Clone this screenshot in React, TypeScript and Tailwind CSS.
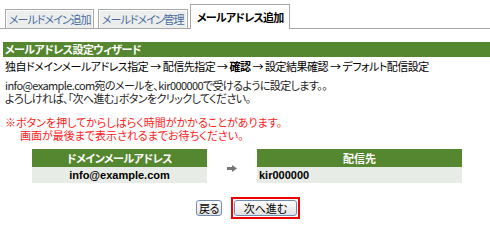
import React from 'react';

const font = "font-['MS_UI_Gothic','Noto_Sans_CJK_JP',sans-serif] [font-feature-settings:'palt']";

function Tab({ label, active, w }: { label: string; active?: boolean; w: string }) {
  if (active) {
    return (
      <div className={`-mb-px h-[25px] border border-b-0 border-[#a8a8a8] bg-white pl-[6px] pt-[5px] text-[11px] font-bold leading-[14px] tracking-[-0.8px] text-black ${w}`}>
        {label}
      </div>
    );
  }
  return (
    <div className={`h-[19px] border border-b-0 border-[#a8a8a8] bg-[#eceeee] text-[11px] leading-[16px] tracking-[-1px] text-[#4a6c9c] ${w}`}>
      <div className="h-full border border-b-0 border-white pl-[2px]">{label}</div>
    </div>
  );
}

function Arrow() {
  return (
    <svg width="10" height="7" viewBox="0 0 10 7" className="mx-auto">
      <rect x="0" y="2" width="6" height="3" fill="#777" />
      <path d="M5 0 L10 3.5 L5 7 Z" fill="#777" />
    </svg>
  );
}

export default function App() {
  return (
    <div className={`w-[490px] h-[244px] overflow-hidden bg-white text-black ${font}`}>
      <div className="flex h-[29px] items-end border-b border-[#a8a8a8] pl-[5px]">
        <Tab label="メールドメイン追加" w="w-[89px]" />
        <div className="w-[4px]" />
        <Tab label="メールドメイン管理" w="w-[90px]" />
        <div className="w-[2px]" />
        <Tab label="メールアドレス追加" active w="w-[100px]" />
      </div>

      <div className="mt-[13px] ml-[3px] h-[15px] bg-[#558730] px-[2px] text-[11px] font-bold leading-[15px] tracking-[-0.6px] text-white">
        メールアドレス設定ウィザード
      </div>

      <div className="h-[16px] whitespace-nowrap pl-[5px] pt-[2px] text-[11px] leading-[14px] tracking-[-0.5px]">
        独自ドメインメールアドレス指定 → 配信先指定 → <b>確認</b> → 設定結果確認 → デフォルト配信設定
      </div>

      <div className="mt-[6px] whitespace-nowrap pl-[5px] text-[11px] leading-[13px] tracking-[-0.6px] text-[#222]">
        <p className="h-[13px]">info@example.com宛のメールを、kir000000で受けるように設定します。。</p>
        <p className="h-[13px]">よろしければ、「次へ進む」ボタンをクリックしてください。</p>
      </div>

      <div className="mt-[11px] whitespace-nowrap pl-[5px] text-[11px] leading-[13px] text-[#ff2020]">
        <p className="h-[13px]">※ボタンを押してからしばらく時間がかかることがあります。</p>
        <p className="h-[13px] pl-[15px]">画面が最後まで表示されるまでお待ちください。</p>
      </div>

      <div className="mt-[7px] ml-[32px] flex">
        <div className="w-[175px]">
          <div className="h-[18px] bg-[#558730] text-center text-[11px] font-bold leading-[18px] tracking-[-0.5px] text-white">ドメインメールアドレス</div>
          <div className="h-[16px] bg-[#e8ece6] text-center font-['Liberation_Sans',sans-serif] text-[11px] font-bold leading-[16px]">info@example.com</div>
        </div>
        <div className="flex w-[50px] items-center pt-[4px]">
          <Arrow />
        </div>
        <div className="w-[205px]">
          <div className="h-[18px] bg-[#558730] text-center text-[11px] font-bold leading-[18px] text-white">配信先</div>
          <div className="h-[16px] bg-[#e8ece6] pl-[2px] font-['Liberation_Sans',sans-serif] text-[11px] font-bold leading-[16px]">kir000000</div>
        </div>
      </div>

      <div className="mt-[14px] flex items-center gap-[9px] pl-[196px]">
        <button className="h-[16px] w-[26px] rounded-[3px] border border-[#6f8cb0] bg-gradient-to-b from-white to-[#e2e2e2] text-[11px] leading-[12px] tracking-[-0.5px] text-black">
          戻る
        </button>
        <div className="border-2 border-[#ee0000] px-[1px] py-[1px]">
          <button className="block h-[16px] w-[63px] rounded-[3px] border border-[#6f8cb0] bg-gradient-to-b from-white to-[#e2e2e2] text-[11px] leading-[12px] text-black">
            次へ進む
          </button>
        </div>
      </div>
    </div>
  );
}
